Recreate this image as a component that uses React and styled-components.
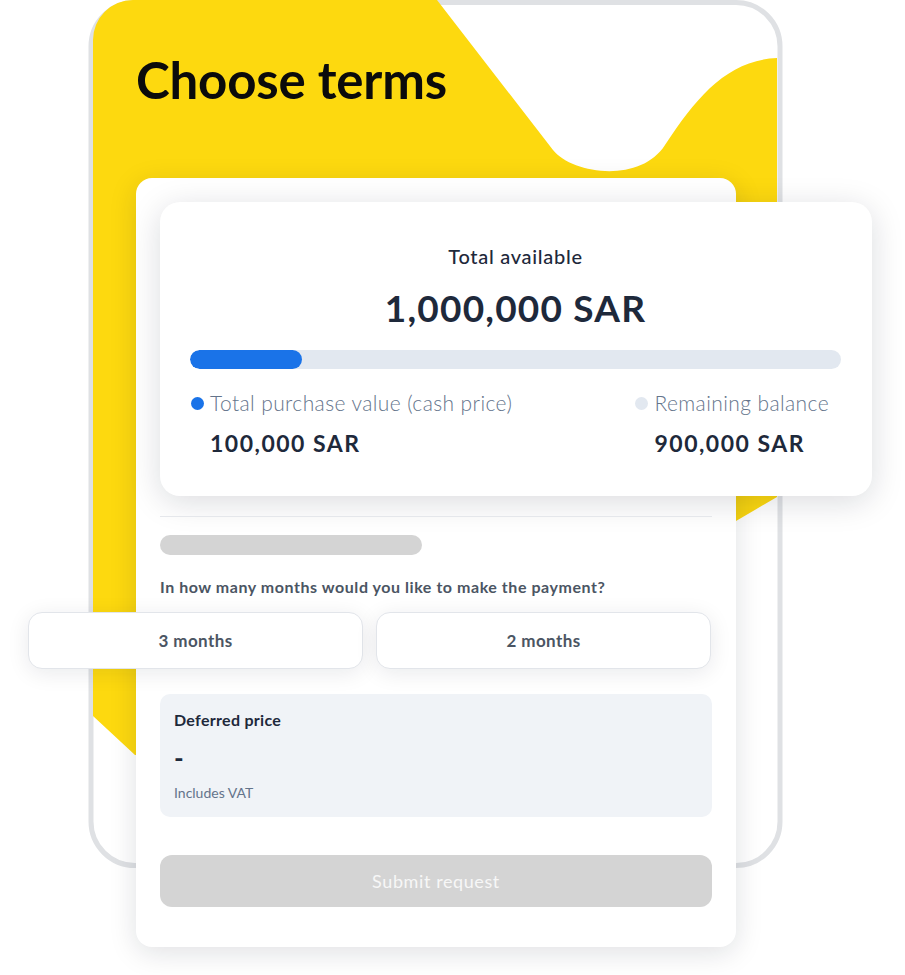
import React from "react";
import styled, { createGlobalStyle } from "styled-components";

const Global = createGlobalStyle`
  html, body { margin: 0; padding: 0; background: #ffffff; }
  body { font-family: Lato, "Noto Sans", sans-serif; -webkit-font-smoothing: antialiased; }
  * { box-sizing: border-box; }
`;

const Stage = styled.div`
  position: relative;
  width: 905px;
  height: 975px;
  overflow: hidden;
  background: #ffffff;
`;

const Backdrop = styled.svg`
  position: absolute;
  left: 0;
  top: 0;
  width: 905px;
  height: 975px;
  z-index: 0;
`;

const Content = styled.div`
  position: relative;
  z-index: 1;
  display: flex;
  flex-direction: column;
  padding-left: 136px;
`;

const Header = styled.header`
  height: 178px;
  padding-top: 49px;
`;

const Title = styled.h1`
  margin: 0;
  font-family: Lato, sans-serif;
  font-weight: 700;
  font-size: 51px;
  line-height: 1.2;
  color: #0b0b0b;
  letter-spacing: -0.2px;
`;

const MainCard = styled.section`
  width: 600px;
  height: 769px;
  background: #ffffff;
  border-radius: 16px;
  box-shadow: 0 6px 28px rgba(15, 23, 42, 0.13);
  padding: 24px 24px 40px;
  display: flex;
  flex-direction: column;
`;

const SummaryCard = styled.div`
  width: 712px;
  height: 295px;
  background: #ffffff;
  border-radius: 20px;
  box-shadow: 0 6px 32px rgba(15, 23, 42, 0.15);
  padding: 42px 31px 0 30px;
  display: flex;
  flex-direction: column;
  align-items: stretch;
`;

const Caption = styled.div`
  text-align: center;
  font-size: 20px;
  line-height: 24px;
  font-weight: 500;
  letter-spacing: 0.7px;
  color: #1e293b;
`;

const Amount = styled.div`
  margin-top: 20px;
  text-align: center;
  font-size: 37px;
  line-height: 40px;
  font-weight: 700;
  color: #1e293b;
  letter-spacing: 1.2px;
`;

const Track = styled.div`
  margin-top: 22px;
  height: 19px;
  border-radius: 10px;
  background: #e2e8f0;
  overflow: hidden;
`;

const Fill = styled.div`
  height: 100%;
  border-radius: 10px;
  background: #1a73e8;
`;

const Legend = styled.div`
  margin-top: 22px;
  display: flex;
  justify-content: space-between;
`;

const LegendItem = styled.div`
  display: grid;
  grid-template-columns: 14px auto;
  column-gap: 6px;
  row-gap: 14px;
  align-items: center;
  margin-right: ${(p) => (p.$right ? "12px" : "0")};
`;

const Dot = styled.span`
  width: 13px;
  height: 13px;
  border-radius: 50%;
  background: ${(p) => p.$color};
  margin-left: 1px;
`;

const LegendLabel = styled.span`
  font-size: 21px;
  line-height: 24px;
  font-weight: 300;
  letter-spacing: 0.4px;
  color: #64748b;
`;

const LegendValue = styled.span`
  grid-column: 2;
  font-size: 23px;
  line-height: 28px;
  font-weight: 700;
  letter-spacing: 1.5px;
  color: #1e293b;
`;

const Divider = styled.hr`
  margin: 20px 0 0;
  border: 0;
  height: 1px;
  background: #e5e7eb;
`;

const Skeleton = styled.div`
  margin-top: 18px;
  width: 262px;
  height: 20px;
  border-radius: 10px;
  background: #d4d4d4;
`;

const Question = styled.p`
  margin: 22px 0 0;
  font-size: 16px;
  line-height: 20px;
  font-weight: 700;
  letter-spacing: 0.55px;
  color: #4b5563;
`;

const Options = styled.div`
  margin-top: 15px;
  margin-left: -132px;
  display: grid;
  grid-template-columns: 335px 335px;
  column-gap: 13px;
`;

const Option = styled.button`
  height: 57px;
  border: 1px solid #e2e5ea;
  border-radius: 14px;
  background: #ffffff;
  box-shadow: 0 4px 22px rgba(15, 23, 42, 0.09);
  font-family: Lato, sans-serif;
  font-size: 17px;
  font-weight: 700;
  letter-spacing: 0.4px;
  color: #4b5563;
  cursor: pointer;
`;

const PriceBox = styled.div`
  margin-top: 25px;
  height: 123px;
  border-radius: 10px;
  background: #f0f3f7;
  padding: 16px 14px 0;
  display: flex;
  flex-direction: column;
`;

const PriceLabel = styled.div`
  font-size: 16px;
  line-height: 20px;
  font-weight: 700;
  letter-spacing: 0.3px;
  color: #1e293b;
`;

const PriceValue = styled.div`
  margin-top: 13px;
  font-size: 26px;
  line-height: 30px;
  font-weight: 700;
  color: #1e293b;
`;

const PriceNote = styled.div`
  margin-top: 11px;
  font-size: 14px;
  line-height: 18px;
  font-weight: 400;
  color: #64748b;
`;

const Submit = styled.button`
  margin-top: 38px;
  height: 52px;
  width: 100%;
  border: 0;
  border-radius: 12px;
  background: #d4d4d4;
  color: #f7f7f7;
  font-family: Lato, sans-serif;
  font-size: 18px;
  font-weight: 400;
  letter-spacing: 0.6px;
`;

export default function App() {
  const used = 100000;
  const total = 1000000;
  return (
    <Stage>
      <Global />
      <Backdrop viewBox="0 0 905 975" aria-hidden="true">
        <rect x="91" y="2.5" width="689" height="863" rx="44" fill="none" stroke="#dfe1e4" strokeWidth="5" />
        <path
          d="M93 40 A40 40 0 0 1 133 0 L437 0 L553 150 C572 174 640 184 665 145 C697 96 728 60 777 58 L777 497 L736 521 L440 780 L135 755 L93 716 Z"
          fill="#FDD90F"
        />
      </Backdrop>
      <Content>
        <Header>
          <Title>Choose terms</Title>
        </Header>
        <MainCard>
          <SummaryCard>
            <Caption>Total available</Caption>
            <Amount>1,000,000 SAR</Amount>
            <Track>
              <Fill style={{ width: `${(used / total) * 100 * 1.72}%` }} />
            </Track>
            <Legend>
              <LegendItem>
                <Dot $color="#1a73e8" />
                <LegendLabel>Total purchase value (cash price)</LegendLabel>
                <LegendValue>100,000 SAR</LegendValue>
              </LegendItem>
              <LegendItem $right>
                <Dot $color="#e2e8f0" />
                <LegendLabel>Remaining balance</LegendLabel>
                <LegendValue>900,000 SAR</LegendValue>
              </LegendItem>
            </Legend>
          </SummaryCard>
          <Divider />
          <Skeleton />
          <Question>In how many months would you like to make the payment?</Question>
          <Options>
            <Option>3 months</Option>
            <Option>2 months</Option>
          </Options>
          <PriceBox>
            <PriceLabel>Deferred price</PriceLabel>
            <PriceValue>-</PriceValue>
            <PriceNote>Includes VAT</PriceNote>
          </PriceBox>
          <Submit>Submit request</Submit>
        </MainCard>
      </Content>
    </Stage>
  );
}
